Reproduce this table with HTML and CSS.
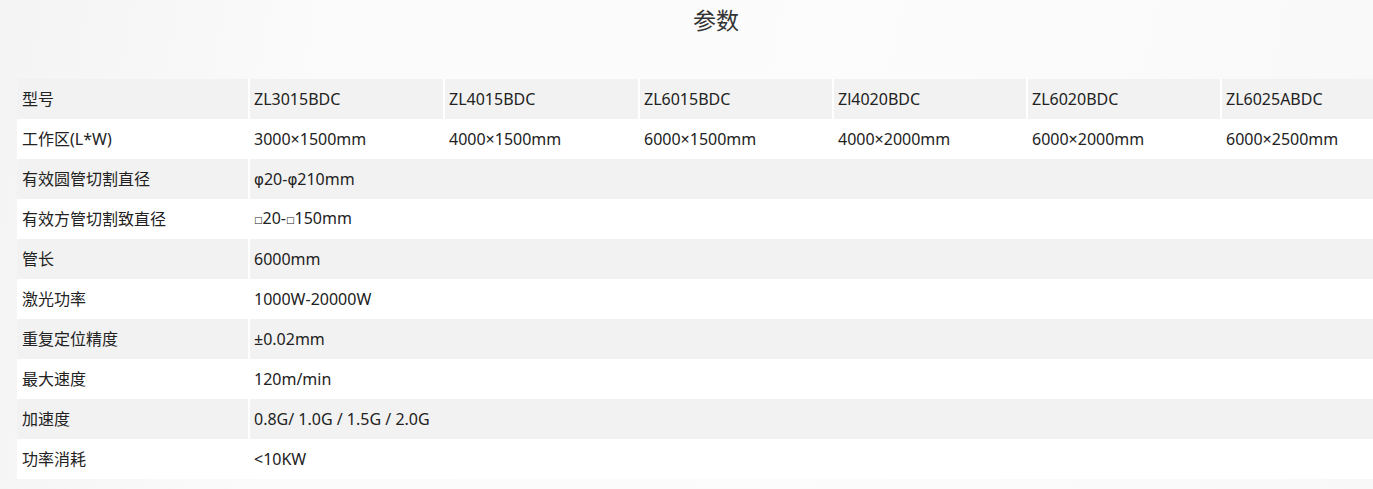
FILE: index.html
```html
<!DOCTYPE html>
<html lang="zh">
<head>
<meta charset="utf-8">
<link rel="stylesheet" href="styles.css">
</head>
<body>
<div class="page">
  <h2 class="title">参数</h2>
  <table class="spec">
    <colgroup>
      <col class="c-label">
      <col class="c-wide"><col class="c-wide"><col class="c-val"><col class="c-val"><col class="c-val"><col class="c-val">
    </colgroup>
    <tbody>
      <tr><td>型号</td><td>ZL3015BDC</td><td>ZL4015BDC</td><td>ZL6015BDC</td><td>Zl4020BDC</td><td>ZL6020BDC</td><td>ZL6025ABDC</td></tr>
      <tr><td>工作区(L*W)</td><td>3000×1500mm</td><td>4000×1500mm</td><td>6000×1500mm</td><td>4000×2000mm</td><td>6000×2000mm</td><td>6000×2500mm</td></tr>
      <tr><td>有效圆管切割直径</td><td colspan="6"><span class="phi">φ</span>20-<span class="phi">φ</span>210mm</td></tr>
      <tr><td>有效方管切割致直径</td><td colspan="6"><span class="sq">□</span>20-<span class="sq">□</span>150mm</td></tr>
      <tr><td>管长</td><td colspan="6">6000mm</td></tr>
      <tr><td>激光功率</td><td colspan="6">1000W-20000W</td></tr>
      <tr><td>重复定位精度</td><td colspan="6">±0.02mm</td></tr>
      <tr><td>最大速度</td><td colspan="6">120m/min</td></tr>
      <tr><td>加速度</td><td colspan="6">0.8G/ 1.0G / 1.5G / 2.0G</td></tr>
      <tr><td>功率消耗</td><td colspan="6">&lt;10KW</td></tr>
    </tbody>
  </table>
</div>
</body>
</html>
```
FILE: styles.css
```css
html, body {
  margin: 0;
  padding: 0;
  overflow: hidden;
}
body {
  background: linear-gradient(100deg, #f4f4f4 0%, #fbfbfb 25%, #fcfcfc 60%, #f8f8f8 100%);
  font-family: "Noto Sans", "Noto Sans CJK SC", sans-serif;
  color: #222;
  width: 1432px;
  height: 489px;
}
.page {
  width: 1432px;
  padding: 0 17px;
  box-sizing: border-box;
}
.title {
  margin: 0;
  padding-top: 3px;
  height: 76px;
  text-align: center;
  font-size: 23px;
  font-weight: 400;
  line-height: 32px;
  color: #333;
  font-family: "Noto Sans CJK SC", sans-serif;
}
.spec {
  width: 1398px;
  table-layout: fixed;
  border-collapse: collapse;
  font-size: 16px;
}
.c-label { width: 232px; }
.c-wide { width: 195px; }
.c-val { width: 194px; }
.spec td {
  height: 40px;
  padding: 0 4px;
  border-left: 2px solid #fff;
  box-sizing: border-box;
  vertical-align: middle;
  white-space: nowrap;
  background: #fff;
  line-height: 20px;
}
.spec td:first-child {
  border-left: 0;
  padding-left: 5px;
}
.spec tr:nth-child(odd) td {
  background: #f2f2f2;
}
.phi {
  font-family: "DejaVu Sans", sans-serif;
  font-size: 15px;
}
.sq {
  font-family: "DejaVu Sans", sans-serif;
  font-size: 9px;
  vertical-align: 1px;
}
```
